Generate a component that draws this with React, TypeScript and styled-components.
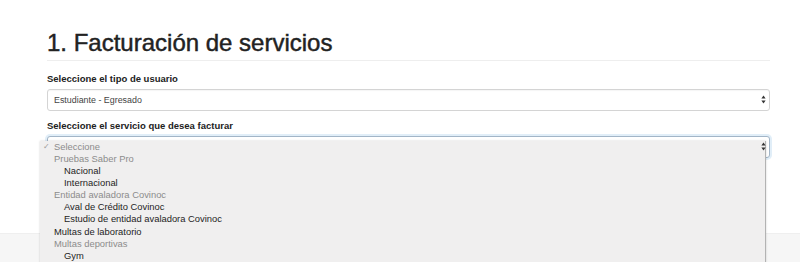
import React from "react";
import styled, { createGlobalStyle } from "styled-components";

const GlobalStyle = createGlobalStyle`
  html, body { margin: 0; padding: 0; background: #ffffff; }
  body {
    font-family: "Liberation Sans", Arial, Helvetica, sans-serif;
    color: #333333;
    width: 800px;
    height: 262px;
    overflow: hidden;
  }
  #root { width: 800px; }
`;

const Page = styled.div`
  width: 800px;
  display: flex;
  flex-direction: column;
`;

const Content = styled.main`
  padding: 29.5px 30px 0 47px;
  height: 233px;
  box-sizing: border-box;
`;

const Title = styled.h1`
  margin: 0;
  font-size: 24px;
  line-height: 26.4px;
  font-weight: normal;
  color: #222222;
  -webkit-text-stroke: 0.45px #222222;
  padding-bottom: 4px;
  border-bottom: 1px solid #eeeeee;
  margin-bottom: 11px;
`;

const Group = styled.div`
  margin-bottom: 8px;
  position: relative;
`;

const Label = styled.label`
  display: block;
  font-size: 9.5px;
  line-height: 14px;
  font-weight: bold;
  color: #222;
  margin-bottom: 3px;
`;

const SelectBox = styled.div<{ $focused?: boolean }>`
  position: relative;
  height: 22px;
  box-sizing: border-box;
  border: 1px solid ${(p) => (p.$focused ? "#a2b5c7" : "#d4d4d4")};
  border-radius: 3px;
  background: #fff;
  display: flex;
  align-items: center;
  padding: 0 6px;
  font-size: 8.9px;
  color: #444;
  box-shadow: ${(p) =>
    p.$focused
      ? "0 0 0 2px rgba(170, 205, 235, 0.35)"
      : "inset 0 1px 1px rgba(0,0,0,0.04)"};
`;

const SelectText = styled.span`
  flex: 1;
`;

const Arrows = styled.svg`
  position: relative;
  z-index: 3;
  margin-right: -3px;
`;

const Dropdown = styled.div`
  position: absolute;
  left: -8px;
  top: 4px;
  width: 726px;
  height: 124px;
  box-sizing: border-box;
  background: #f0efef;
  border-right: 1px solid #b3b3b3;
  box-shadow: 0 0 2px rgba(0, 0, 0, 0.18);
  z-index: 2;
  font-size: 9.4px;
`;

const Option = styled.div<{ $muted?: boolean; $indent?: boolean }>`
  position: relative;
  height: 12.1px;
  line-height: 12.1px;
  padding-left: ${(p) => (p.$indent ? "24px" : "14px")};
  color: ${(p) => (p.$muted ? "#8c8c8c" : "#1e1e1e")};
  white-space: nowrap;
`;

const Check = styled.span`
  position: absolute;
  left: 3px;
  top: 0;
  color: #9a9a9a;
  font-size: 8px;
`;

const Footer = styled.footer`
  height: 29px;
  background: #f6f6f6;
  border-top: 1px solid #efefef;
`;

const ArrowIcon = () => (
  <Arrows width="5" height="9" viewBox="0 0 5 9">
    <path d="M2.5 0.5 L4.6 3.5 L0.4 3.5 Z" fill="#333" />
    <path d="M2.5 8.5 L4.6 5.5 L0.4 5.5 Z" fill="#333" />
  </Arrows>
);

const options: { text: string; muted?: boolean; indent?: boolean; checked?: boolean }[] = [
  { text: "Seleccione", muted: true, checked: true },
  { text: "Pruebas Saber Pro", muted: true },
  { text: "Nacional", indent: true },
  { text: "Internacional", indent: true },
  { text: "Entidad avaladora Covinoc", muted: true },
  { text: "Aval de Crédito Covinoc", indent: true },
  { text: "Estudio de entidad avaladora Covinoc", indent: true },
  { text: "Multas de laboratorio" },
  { text: "Multas deportivas", muted: true },
  { text: "Gym", indent: true },
];

export default function App() {
  return (
    <>
      <GlobalStyle />
      <Page>
        <Content>
          <Title>1. Facturación de servicios</Title>
          <Group>
            <Label>Seleccione el tipo de usuario</Label>
            <SelectBox>
              <SelectText>Estudiante - Egresado</SelectText>
              <ArrowIcon />
            </SelectBox>
          </Group>
          <Group>
            <Label>Seleccione el servicio que desea facturar</Label>
            <SelectBox $focused>
              <SelectText />
              <ArrowIcon />
              <Dropdown>
                {options.map((o) => (
                  <Option key={o.text} $muted={o.muted} $indent={o.indent}>
                    {o.checked && <Check>✓</Check>}
                    {o.text}
                  </Option>
                ))}
              </Dropdown>
            </SelectBox>
          </Group>
        </Content>
        <Footer />
      </Page>
    </>
  );
}
